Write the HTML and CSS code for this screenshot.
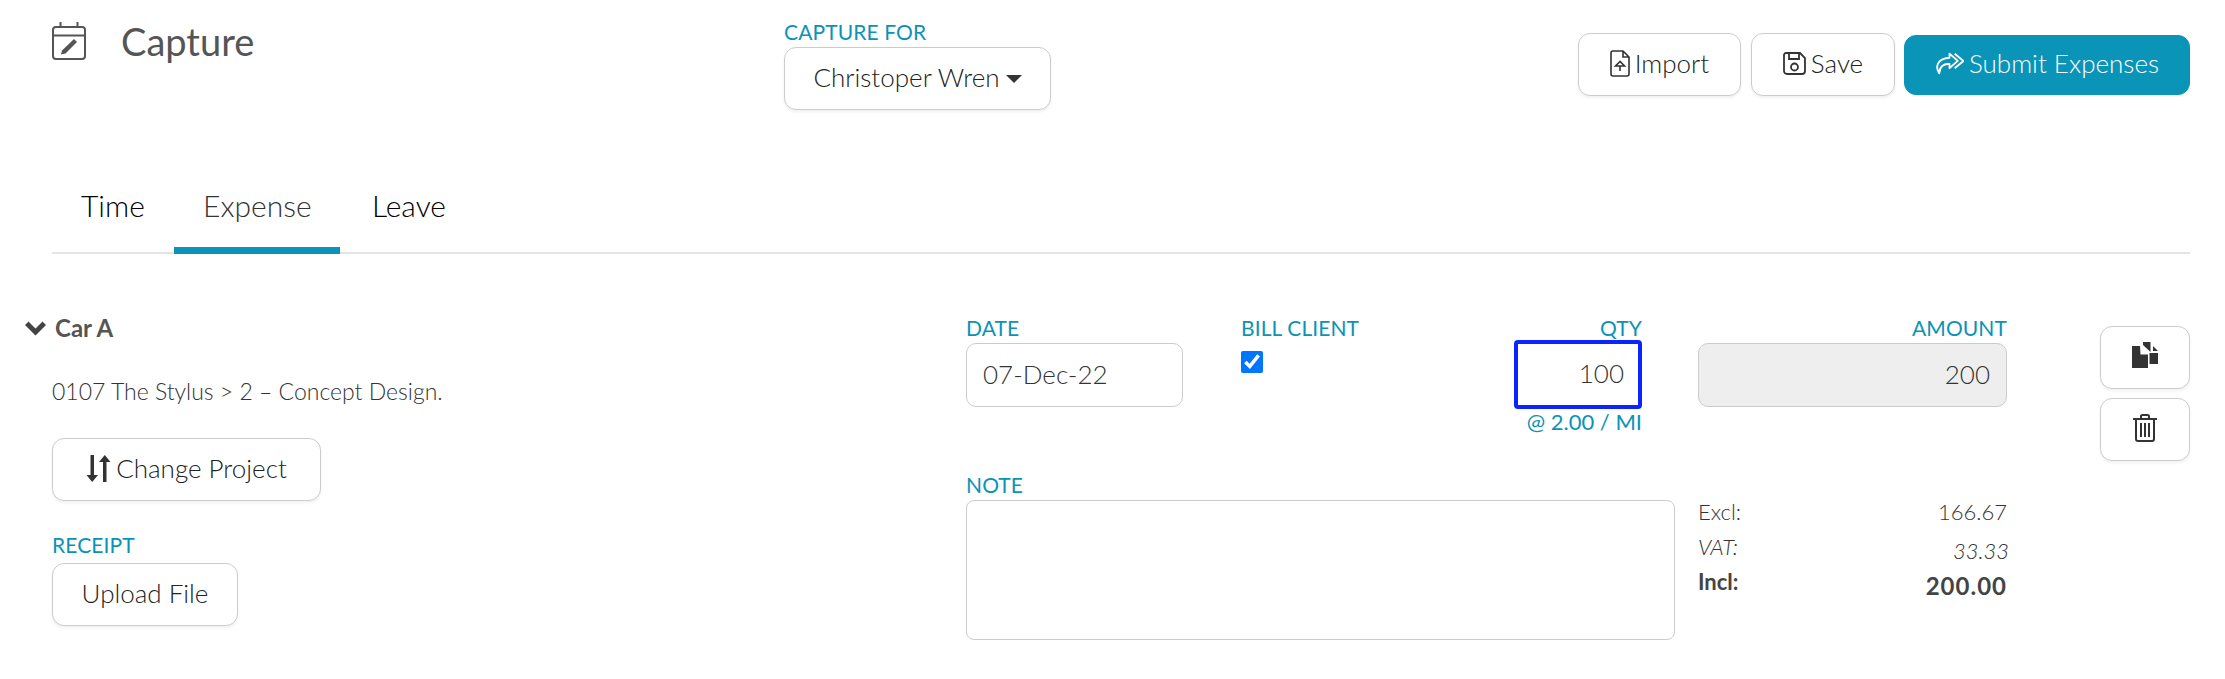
FILE: index.html
```html
<!DOCTYPE html>
<html lang="en">
<head>
<meta charset="utf-8">
<title>Capture</title>
<link rel="stylesheet" href="styles.css">
</head>
<body>
<div class="page">
  <header class="head">
    <div class="title">
      <svg class="cal" viewBox="0 0 34 38" width="34" height="38" fill="none" stroke="#555" stroke-width="2"><rect x="1" y="5" width="32" height="32" rx="3"/><path d="M1 13.500H33M8.500 0V5M25.500 0V5"/><path d="M9 32.500l1-4L22 17l3 3L13.500 31.500z" fill="#555" stroke="none"/></svg>
      <h1>Capture</h1>
    </div>
    <div class="for">
      <label class="lbl">CAPTURE FOR</label>
      <button class="btn who">Christoper Wren<span class="caret"></span></button>
    </div>
    <div class="actions">
      <button class="btn imp"><svg viewBox="0 0 20 27" width="20" height="27" fill="none" stroke="#333" stroke-width="1.600"><path d="M3 1H13L19 7V24a2 2 0 0 1-2 2H3a2 2 0 0 1-2-2V3a2 2 0 0 1 2-2zM13 1V7H19"/><path d="M10 11.500l-4.500 4.500H14.500zM10 16V21" stroke-width="1.600"/></svg>Import</button>
      <button class="btn sav"><svg viewBox="0 0 23 23" width="23" height="23" fill="none" stroke="#333" stroke-width="1.800"><path d="M3 1H17L22 6V19a3 3 0 0 1-3 3H4a3 3 0 0 1-3-3V3a2 2 0 0 1 2-2zM6 1V7H16V1"/><circle cx="11.500" cy="15" r="3.500"/></svg>Save</button>
      <button class="btn sub"><svg viewBox="1 0 28 22" width="29" height="23" fill="none" stroke="#fff" stroke-width="1.800" stroke-linejoin="round"><path d="M15 1.500L23 8.500L15 15.500V11.500C9 11 5.500 14 5 20.500C1.500 15 2 6.500 15 5.500z"/><path d="M20 1.500L28.500 8.500L20 15.500"/></svg>Submit Expenses</button>
    </div>
  </header>

  <nav class="tabs">
    <a class="tab">Time</a>
    <a class="tab on">Expense</a>
    <a class="tab">Leave</a>
  </nav>

  <section class="row">
    <div class="info">
      <div class="name"><svg viewBox="0 0 21 15" width="21" height="15" fill="#444"><path d="M0 4L3.500 .5 10.500 7.500 17.500 .5 21 4 10.500 14.500z"/></svg>Car A</div>
      <p class="desc">0107 The Stylus &gt; 2 – Concept Design.</p>
      <button class="btn chg"><svg viewBox="0 0 25 27" width="25" height="27" fill="#333"><path d="M4.500 0H8V20H12L6.200 27 .5 20H4.500zM17 7H13L18.800 0 24.500 7H20.500V27H17z"/></svg>Change Project</button>
      <label class="lbl rcpt">RECEIPT</label>
      <button class="btn upl">Upload File</button>
    </div>
    <div class="form">
      <div class="top">
        <div class="f date"><label class="lbl">DATE</label><input class="inp" value="07-Dec-22"></div>
        <div class="f bill"><label class="lbl">BILL CLIENT</label><input class="chk" type="checkbox" checked></div>
        <div class="f qty"><label class="lbl end">QTY</label><input class="inp focus" value="100"><span class="rate">@ 2.00 / MI</span></div>
        <div class="f amt"><label class="lbl end">AMOUNT</label><input class="inp off" value="200" readonly></div>
      </div>
      <div class="bottom">
        <div class="f note"><label class="lbl">NOTE</label><textarea class="area"></textarea></div>
        <div class="sum">
          <div class="line"><span>Excl:</span><span>166.67</span></div>
          <div class="line vat"><span>VAT:</span><span class="low">33.33</span></div>
          <div class="line tot"><span>Incl:</span><span class="low big">200.00</span></div>
        </div>
      </div>
    </div>
    <div class="side">
      <button class="btn ico"><svg viewBox="0 0 26 26" width="26" height="26" fill="#333"><path d="M0 4H8L8.500 12.500H16V26H0zM11 0H18.500V10L11 3zM21 4L26 9H21zM17.500 11H26V22H17.500z"/></svg></button>
      <button class="btn ico"><svg viewBox="0 0 24 28" width="24" height="28" fill="none" stroke="#333" stroke-width="2"><path d="M0 5H24M8 5V2.500A1.500 1.500 0 0 1 9.500 1H14.500A1.500 1.500 0 0 1 16 2.500V5M3 5V25A2 2 0 0 0 5 27H19A2 2 0 0 0 21 25V5M8 9V23M12 9V23M16 9V23"/></svg></button>
    </div>
  </section>
</div>
</body>
</html>
```

FILE: styles.css
```css
* { box-sizing: border-box; }
html, body { margin: 0; background: #fff; }
body { font-family: "Lato", "Liberation Sans", sans-serif; font-weight: 300; color: #333; font-size: 23px; }
.page { padding: 0 35px 0 52px; }
button, input, textarea { font-family: inherit; font-weight: 300; }

.head { display: flex; height: 158px; align-items: flex-start; }
.title { display: flex; width: 732px; padding-top: 22px; gap: 35px; }
.cal { display: block; }
h1 { margin: 0; font-size: 38px; font-weight: 400; line-height: 38px; color: #555; }
.lbl { display: block; color: #0b93b6; font-size: 21px; line-height: 30px; font-weight: 400; letter-spacing: .1px; }
.for { padding-top: 17px; }
.btn { display: flex; align-items: center; justify-content: center; gap: 5px; background: #fff; border: 1.500px solid #ccc; border-radius: 12px; color: #222; font-size: 26px; height: 63px; padding: 0 0 3px; box-shadow: 0 2px 3px rgba(0,0,0,.06); }
.who { width: 267px; }
.caret { width: 0; height: 0; margin-left: 1px; margin-top: 3px; border: 8px solid transparent; border-top: 8px solid #333; border-bottom: 0; }
.actions { display: flex; margin-left: auto; margin-top: 33px; align-items: center; }
.imp { width: 163px; }
.sav { width: 144px; margin-left: 10px; }
.sub { width: 286px; height: 60px; margin-left: 9px; background: #0a94b8; border-color: #0a94b8; color: #fff; box-shadow: none; }

.tabs { display: flex; gap: 3px; border-bottom: 2px solid #e4e4e4; height: 96px; }
.tab { padding: 23px 29px 0; color: #000; font-size: 30px; line-height: 48px; height: 96px; }
.tab:first-child { width: 119px; }
.tab:nth-child(2) { width: 166px; }
.tab.on { color: #333; border-bottom: 7px solid #0a94b8; }

.row { display: flex; padding-top: 59px; }
.info { width: 914px; }
.name { display: flex; align-items: center; gap: 9px; margin-left: -27px; font-weight: 700; font-size: 24px; line-height: 30px; color: #555; height: 30px; }
.desc { margin: 33px 0 0; font-size: 23px; line-height: 30px; color: #333; }
.chg { width: 269px; margin-top: 32px; }
.rcpt { margin-top: 31px; line-height: 26px; }
.upl { width: 186px; margin-top: 5px; }

.form { width: 1041px; }
.top { display: flex; }
.f { display: flex; flex-direction: column; }
.date { width: 275px; }
.bill { width: 273px; }
.qty { width: 128px; margin-right: 56px; }
.amt { width: 309px; }
.end { text-align: right; }
.inp { height: 64px; border: 1.500px solid #ccc; border-radius: 10px; color: #333; font-size: 26px; padding: 0 16px 3px; background: #fff; width: 100%; min-width: 0; }
.date .inp { width: 217px; }
.focus { text-align: right; height: 69px; margin-top: -3px; border: 4px solid #0a24ff; border-radius: 4px; outline: 0; padding: 0 14px 3px; }
.off { text-align: right; background: #eee; }
.chk { width: 22px; height: 22px; margin: 8px 0 0; accent-color: #0075ff; }
.rate { color: #0b93b6; font-size: 22px; font-weight: 400; line-height: 26px; text-align: right; }
.bottom { display: flex; gap: 23px; margin-top: 35px; }
.note { width: 709px; }
.area { height: 140px; width: 100%; border: 1.500px solid #ccc; border-radius: 8px; resize: none; background: #fff; display: block; }
.sum { width: 309px; padding-top: 29px; font-size: 22px; }
.line { display: flex; justify-content: space-between; height: 35px; line-height: 26px; }
.vat { font-style: italic; }
.tot { font-weight: 700; color: #444; }
.low { position: relative; top: 4px; }
.vat .low { left: 2px; }
.big { font-size: 24px; letter-spacing: 1px; }

.side { display: flex; flex-direction: column; gap: 9px; margin-left: 93px; margin-top: 13px; margin-right: 0; }
.ico { width: 90px; height: 63px; align-items: flex-start; padding: 15px 0 0; }
```
